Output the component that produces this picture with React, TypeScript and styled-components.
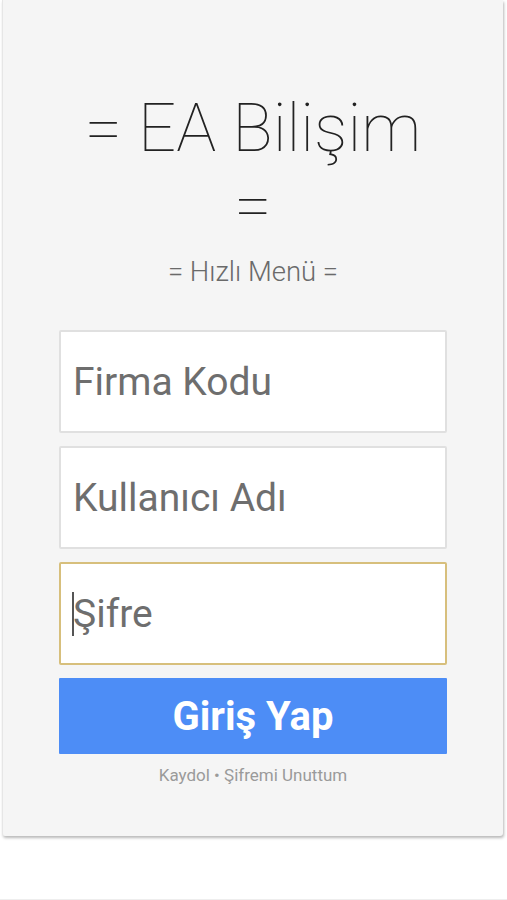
import React from "react";
import styled, { createGlobalStyle } from "styled-components";

const Global = createGlobalStyle`
  html, body { margin: 0; padding: 0; background: #ffffff; }
  body { font-family: Roboto, "Noto Sans", sans-serif; }
  * { box-sizing: border-box; }
`;

const Page = styled.div`
  width: 507px;
  height: 900px;
  background: #ffffff;
  padding: 0 4px 0 2px;
  border-bottom: 1px solid #eeeeee;
`;

const Card = styled.div`
  width: 501px;
  height: 836px;
  background: #f5f5f5;
  border-left: 1px solid #e6e6e6;
  border-radius: 0 0 3px 3px;
  box-shadow: 1px 2px 3px rgba(0, 0, 0, 0.28);
  display: flex;
  flex-direction: column;
  align-items: center;
  padding-top: 90px;
`;

const Title = styled.h1`
  margin: 0;
  font-family: Roboto, sans-serif;
  font-weight: 100;
  font-size: 67px;
  line-height: 77px;
  color: #222;
  text-align: center;
  width: 380px;
`;

const Sub = styled.div`
  margin-top: 13px;
  font-family: Roboto, sans-serif;
  font-weight: 300;
  font-size: 27.5px;
  line-height: 30px;
  color: #6a6a6a;
`;

const Form = styled.div`
  margin-top: 43px;
  width: 388px;
  display: flex;
  flex-direction: column;
  gap: 13px;
`;

const Field = styled.div<{ $focused?: boolean }>`
  height: 103px;
  background: #fff;
  border: ${(p) => (p.$focused ? "2px solid #d7bf7c" : "2px solid #e0e0e0")};
  border-radius: 2px;
  display: flex;
  align-items: center;
  padding-left: ${(p) => (p.$focused ? "11px" : "12px")};
  font-family: Roboto, sans-serif;
  font-size: 39px;
  color: #6e6e6e;
`;

const Caret = styled.span`
  display: inline-block;
  width: 2px;
  height: 44px;
  background: #555;
  margin-right: -1px;
`;

const Button = styled.button`
  height: 76px;
  border: none;
  border-radius: 1px;
  background: #4d8df6;
  color: #fff;
  font-family: Roboto, sans-serif;
  font-weight: 700;
  font-size: 40px;
  cursor: pointer;
  padding: 0;
`;

const Links = styled.div`
  margin-top: 11px;
  font-family: Roboto, sans-serif;
  font-size: 17px;
  line-height: 20px;
  color: #9a9a9a;
  text-align: center;
`;

export default function App() {
  return (
    <>
      <Global />
      <Page>
        <Card>
          <Title>= EA Bilişim =</Title>
          <Sub>= Hızlı Menü =</Sub>
          <Form>
            <Field>Firma Kodu</Field>
            <Field>Kullanıcı Adı</Field>
            <Field $focused>
              <Caret />
              Şifre
            </Field>
            <Button>Giriş Yap</Button>
          </Form>
          <Links>Kaydol • Şifremi Unuttum</Links>
        </Card>
      </Page>
    </>
  );
}
